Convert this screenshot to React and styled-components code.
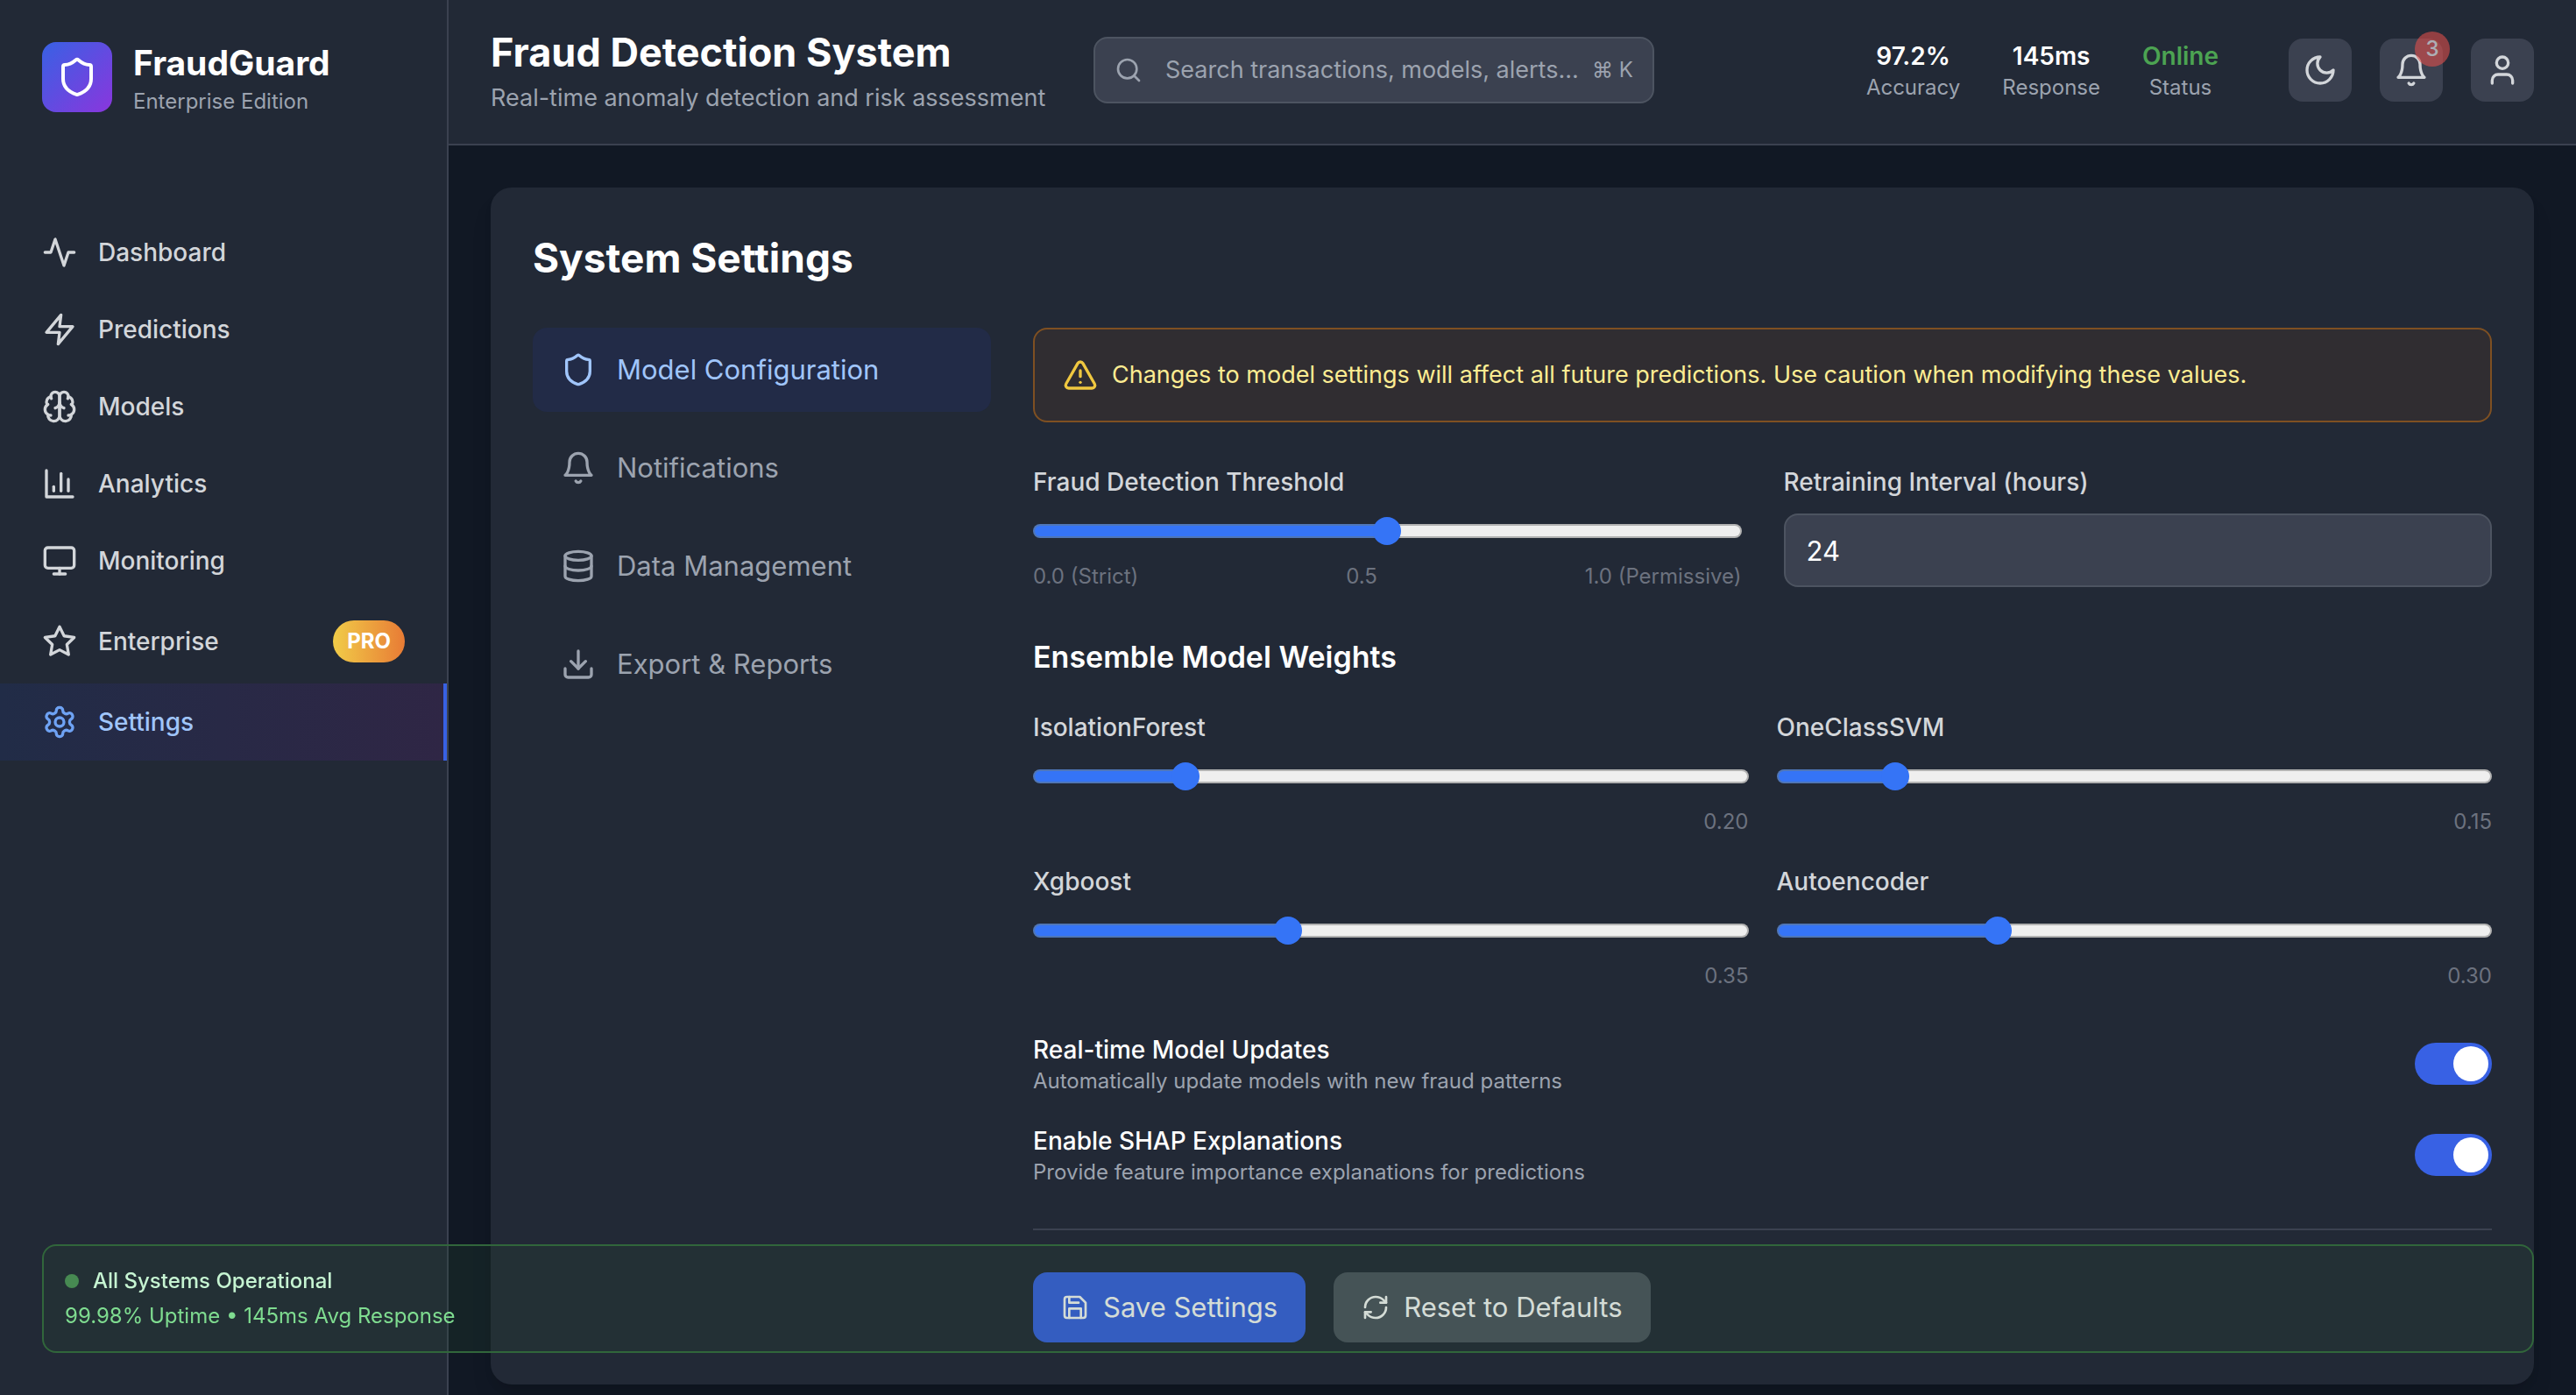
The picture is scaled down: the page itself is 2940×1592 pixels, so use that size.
import React, { useState } from "react";
import styled, { createGlobalStyle, css } from "styled-components";
import {
  Monitor,
  Shield,
  Search,
  User,
  Database,
  Download,
  TriangleAlert,
  RefreshCw,
} from "lucide-react";

const color = {
  page: "#111824",
  surface: "#222936",
  raised: "#3b4150",
  line: "#3b4150",
  edge: "#4d5461",
  white: "#ffffff",
  text: "#d3d6da",
  muted: "#9ca3af",
  faint: "#6c727f",
  blue: "#3861e4",
  sky: "#a0c5fa",
};

const GlobalStyle = createGlobalStyle`
  *, *::before, *::after { box-sizing: border-box; }
  body {
    margin: 0;
    background: ${color.page};
    color: ${color.white};
    font-family: Inter, "Liberation Sans", sans-serif;
    font-size: 28px;
    line-height: 40px;
    -webkit-font-smoothing: antialiased;
  }
  h1, h2, h3, p { margin: 0; }
  button, input { font: inherit; color: inherit; }
  svg { flex: none; display: block; }
`;

const Shell = styled.div`
  display: flex;
  height: 100vh;
`;

const Sidebar = styled.aside`
  flex: none;
  width: 512px;
  background: ${color.surface};
  border-right: 2px solid ${color.line};
`;

const Brand = styled.div`
  display: flex;
  align-items: center;
  gap: 24px;
  padding: 44px 48px;
`;

const BrandMark = styled.span`
  display: grid;
  place-items: center;
  width: 80px;
  height: 80px;
  border-radius: 16px;
  background: linear-gradient(135deg, #3861e4, #8a36dd);
`;

const BrandName = styled.p`
  font-size: 39px;
  line-height: 56px;
  font-weight: 700;
`;

const Small = styled.p`
  font-size: 24px;
  line-height: 32px;
  color: ${color.muted};
`;

const Nav = styled.nav`
  display: flex;
  flex-direction: column;
  padding-top: 68px;
`;

const NavLink = styled.a`
  display: flex;
  align-items: center;
  gap: 24px;
  padding: 24px 48px;
  font-weight: 500;
  text-decoration: none;
  color: ${color.text};
  ${(p) =>
    p.$active &&
    css`
      padding-right: 44px;
      border-right: 4px solid ${color.blue};
      color: ${color.sky};
      background: linear-gradient(90deg, #212c47, #2f2645);
      svg { color: #6ea2f3; }
    `}
`;

const ProBadge = styled.span`
  margin-left: auto;
  padding: 8px 16px;
  border-radius: 24px;
  font-size: 24px;
  line-height: 32px;
  font-weight: 700;
  color: ${color.white};
  background: linear-gradient(90deg, #f1cc48, #e87b35);
`;

const Page = styled.div`
  flex: 1;
  min-width: 0;
  display: flex;
  flex-direction: column;
`;

const Header = styled.header`
  display: flex;
  align-items: center;
  gap: 48px;
  padding: 28px 48px 32px;
  background: ${color.surface};
  border-bottom: 2px solid ${color.line};
`;

const Titles = styled.div`
  flex: none;
  width: 640px;
  white-space: nowrap;
`;

const Heading = styled.h1`
  font-size: 45px;
  line-height: 64px;
  font-weight: 700;
`;

const Tagline = styled.p`
  font-size: 27px;
  color: ${color.muted};
`;

const SearchBox = styled.label`
  display: flex;
  align-items: center;
  flex: none;
  width: 640px;
  height: 76px;
  padding: 0 22px;
  border: 2px solid ${color.edge};
  border-radius: 16px;
  background: ${color.raised};
  color: ${color.muted};
`;

const SearchInput = styled.input`
  flex: 1;
  min-width: 0;
  margin-left: 26px;
  padding: 0;
  border: 0;
  outline: 0;
  background: none;
  font-size: 27px;
  &::placeholder { color: ${color.muted}; opacity: 1; }
`;

const Keys = styled.kbd`
  font-family: inherit;
  font-size: 24px;
  line-height: 32px;
  white-space: nowrap;
`;

const HeaderEnd = styled.div`
  display: flex;
  align-items: center;
  gap: 80px;
  margin-left: auto;
`;

const Stats = styled.div`
  display: flex;
  gap: 48px;
  text-align: center;
`;

const StatValue = styled.p`
  font-weight: 600;
  color: ${(p) => (p.$good ? "#4ca352" : color.white)};
`;

const Actions = styled.div`
  display: flex;
  gap: 32px;
`;

const IconButton = styled.button`
  position: relative;
  display: grid;
  place-items: center;
  width: 72px;
  height: 72px;
  padding: 0;
  border: 0;
  border-radius: 16px;
  background: ${color.raised};
  color: ${color.text};
`;

const Count = styled.span`
  position: absolute;
  top: -8px;
  right: -8px;
  width: 40px;
  height: 40px;
  border-radius: 50%;
  font-size: 24px;
  line-height: 40px;
  font-weight: 500;
  color: ${color.white};
  background: #e4504b;
  opacity: 0.58;
`;

const Main = styled.main`
  flex: 1;
  min-height: 0;
  overflow-y: auto;
  scrollbar-width: none;
  padding: 48px;
`;

const Card = styled.section`
  padding: 48px;
  border-radius: 24px;
  background: ${color.surface};
  box-shadow: 0 20px 30px -6px rgba(0, 0, 0, 0.1), 0 8px 12px -4px rgba(0, 0, 0, 0.1);
`;

const CardTitle = styled.h2`
  margin-bottom: 48px;
  font-size: 46px;
  line-height: 64px;
  font-weight: 700;
`;

const Columns = styled.div`
  display: grid;
  grid-template-columns: repeat(4, 1fr);
  gap: 48px;
`;

const Tabs = styled.div`
  display: flex;
  flex-direction: column;
  gap: 16px;
`;

const Tab = styled.button`
  display: flex;
  align-items: center;
  gap: 24px;
  padding: 24px 32px;
  border: 0;
  border-radius: 16px;
  font-size: 31px;
  line-height: 48px;
  text-align: left;
  color: ${(p) => (p.$active ? color.sky : color.muted)};
  background: ${(p) => (p.$active ? "#222b47" : "transparent")};
`;

const Panel = styled.form`
  grid-column: span 3;
  display: flex;
  flex-direction: column;
  gap: 48px;
`;

const Notice = styled.p`
  display: flex;
  align-items: center;
  gap: 16px;
  padding: 32px;
  border: 2px solid #7f5022;
  border-radius: 16px;
  font-size: 27px;
  background: #302d31;
  color: #fcec92;
  svg { color: #f0c840; }
`;

const FieldGrid = styled.div`
  display: grid;
  grid-template-columns: 1fr 1fr;
  gap: ${(p) => p.$gap}px;
`;

const FieldLabel = styled.label`
  display: block;
  margin-bottom: 16px;
  font-weight: 500;
  color: ${color.text};
`;

const NumberInput = styled.input`
  display: block;
  width: 100%;
  height: 84px;
  padding: 16px 24px;
  border: 2px solid ${color.edge};
  border-radius: 16px;
  font-size: 31px;
  line-height: 48px;
  background: ${color.raised};
  appearance: textfield;
  &::-webkit-inner-spin-button { appearance: none; }
`;

const Range = styled.input`
  appearance: none;
  display: block;
  width: 100%;
  height: 40px;
  margin: 0;
  background: none;
  --stop: calc(16px + (100% - 32px) * var(--value));
  &::-webkit-slider-runnable-track {
    height: 16px;
    border: 2px solid transparent;
    border-radius: 8px;
    background:
      linear-gradient(90deg, #3574f6 var(--stop), #efefef var(--stop)) padding-box,
      linear-gradient(90deg, #4f76b8 var(--stop), #b2b2b2 var(--stop)) border-box;
  }
  &::-webkit-slider-thumb {
    appearance: none;
    width: 32px;
    height: 32px;
    margin: -10px 0 0;
    border-radius: 50%;
    background: #3574f6;
  }
`;

const Scale = styled.div`
  display: flex;
  justify-content: ${(p) => (p.$end ? "flex-end" : "space-between")};
  margin-top: 16px;
  font-size: 24px;
  line-height: 32px;
  color: ${color.faint};
`;

const SubTitle = styled.h3`
  margin-bottom: 32px;
  font-size: 34px;
  line-height: 56px;
  font-weight: 600;
`;

const Toggles = styled.div`
  display: flex;
  flex-direction: column;
  gap: 32px;
`;

const ToggleRow = styled.label`
  display: flex;
  align-items: center;
  justify-content: space-between;
`;

const ToggleName = styled.p`
  font-weight: 500;
`;

const Switch = styled.input`
  appearance: none;
  flex: none;
  display: flex;
  width: 88px;
  height: 48px;
  margin: 0;
  padding: 4px;
  border-radius: 24px;
  background: ${color.edge};
  &::before {
    content: "";
    width: 40px;
    height: 40px;
    border-radius: 50%;
    background: ${color.white};
  }
  &:checked {
    justify-content: flex-end;
    background: ${color.blue};
  }
`;

const Footer = styled.div`
  display: flex;
  gap: 32px;
  padding-top: 48px;
  border-top: 2px solid ${color.line};
`;

const Button = styled.button`
  display: flex;
  align-items: center;
  gap: 16px;
  padding: 16px 32px;
  border: 0;
  border-radius: 16px;
  font-size: 31px;
  line-height: 48px;
  background: ${(p) => (p.$primary ? color.blue : "#4d5460")};
`;

const StatusCard = styled.aside`
  position: fixed;
  left: 48px;
  right: 48px;
  bottom: 48px;
  display: flex;
  flex-direction: column;
  gap: 8px;
  padding: 24px;
  border: 2px solid #31663b;
  border-radius: 16px;
  font-size: 24px;
  line-height: 32px;
  color: #7fdc90;
  background: rgba(39, 81, 50, 0.2);
  pointer-events: none;
`;

const StatusTitle = styled.p`
  display: flex;
  align-items: center;
  gap: 16px;
  font-weight: 500;
  color: #c6f4d2;
  &::before {
    content: "";
    width: 16px;
    height: 16px;
    border-radius: 50%;
    background: #478a52;
  }
`;

const glyph = (...paths) =>
  function Glyph({ size }) {
    return (
      <svg
        width={size}
        height={size}
        viewBox="0 0 24 24"
        fill="none"
        stroke="currentColor"
        strokeWidth="2"
        strokeLinecap="round"
        strokeLinejoin="round"
        aria-hidden="true"
      >
        {paths.map((d) => (
          <path key={d} d={d} />
        ))}
      </svg>
    );
  };

const ActivityIcon = glyph("M22 12h-4l-3 9L9 3l-3 9H2");
const ZapIcon = glyph("M13 2 3 14h9l-1 8 10-12h-9l1-8z");
const BrainIcon = glyph(
  "M12 5a3 3 0 1 0-5.997.125 4 4 0 0 0-2.526 5.77 4 4 0 0 0 .556 6.588A4 4 0 1 0 12 18Z",
  "M12 5a3 3 0 1 1 5.997.125 4 4 0 0 1 2.526 5.77 4 4 0 0 1-.556 6.588A4 4 0 1 1 12 18Z",
  "M15 13a4.5 4.5 0 0 1-3-4 4.5 4.5 0 0 1-3 4",
  "M17.599 6.5a3 3 0 0 0 .399-1.375",
  "M6.003 5.125A3 3 0 0 0 6.401 6.5",
  "M3.477 10.896a4 4 0 0 1 .585-.396",
  "M19.938 10.5a4 4 0 0 1 .585.396",
  "M6 18a4 4 0 0 1-1.967-.516",
  "M19.967 17.484A4 4 0 0 1 18 18"
);
const ChartIcon = glyph("M3 3v18h18", "M18 17V9", "M13 17V5", "M8 17v-3");
const StarIcon = glyph(
  "M12 2l3.09 6.26L22 9.27l-5 4.87 1.18 6.88L12 17.77l-6.18 3.25L7 14.14 2 9.27l6.91-1.01L12 2z"
);
const GearIcon = glyph(
  "M12.22 2h-.44a2 2 0 0 0-2 2v.18a2 2 0 0 1-1 1.73l-.43.25a2 2 0 0 1-2 0l-.15-.08a2 2 0 0 0-2.73.73l-.22.38a2 2 0 0 0 .73 2.73l.15.1a2 2 0 0 1 1 1.72v.51a2 2 0 0 1-1 1.74l-.15.09a2 2 0 0 0-.73 2.73l.22.38a2 2 0 0 0 2.73.73l.15-.08a2 2 0 0 1 2 0l.43.25a2 2 0 0 1 1 1.73V20a2 2 0 0 0 2 2h.44a2 2 0 0 0 2-2v-.18a2 2 0 0 1 1-1.73l.43-.25a2 2 0 0 1 2 0l.15.08a2 2 0 0 0 2.73-.73l.22-.39a2 2 0 0 0-.73-2.73l-.15-.08a2 2 0 0 1-1-1.74v-.5a2 2 0 0 1 1-1.74l.15-.09a2 2 0 0 0 .73-2.73l-.22-.38a2 2 0 0 0-2.73-.73l-.15.08a2 2 0 0 1-2 0l-.43-.25a2 2 0 0 1-1-1.73V4a2 2 0 0 0-2-2z",
  "M12 9a3 3 0 1 0 0 6 3 3 0 0 0 0-6z"
);
const BellIcon = glyph(
  "M6 8a6 6 0 0 1 12 0c0 7 3 9 3 9H3s3-2 3-9",
  "M10.3 21a1.94 1.94 0 0 0 3.4 0"
);
const MoonIcon = glyph("M12 3a6 6 0 0 0 9 9 9 9 0 1 1-9-9Z");
const SaveIcon = glyph(
  "M19 21H5a2 2 0 0 1-2-2V5a2 2 0 0 1 2-2h11l5 5v11a2 2 0 0 1-2 2z",
  "M17 21v-8H7v8",
  "M7 3v5h8"
);

const navItems = [
  { label: "Dashboard", icon: ActivityIcon },
  { label: "Predictions", icon: ZapIcon },
  { label: "Models", icon: BrainIcon },
  { label: "Analytics", icon: ChartIcon },
  { label: "Monitoring", icon: Monitor },
  { label: "Enterprise", icon: StarIcon, badge: "PRO" },
  { label: "Settings", icon: GearIcon, active: true },
];

const stats = [
  { value: "97.2%", label: "Accuracy" },
  { value: "145ms", label: "Response" },
  { value: "Online", label: "Status", good: true },
];

const tabs = [
  { label: "Model Configuration", icon: Shield },
  { label: "Notifications", icon: BellIcon },
  { label: "Data Management", icon: Database },
  { label: "Export & Reports", icon: Download },
];

const weights = [
  { name: "IsolationForest", value: 0.2 },
  { name: "OneClassSVM", value: 0.15 },
  { name: "Xgboost", value: 0.35 },
  { name: "Autoencoder", value: 0.3 },
];

const toggles = [
  { name: "Real-time Model Updates", note: "Automatically update models with new fraud patterns" },
  { name: "Enable SHAP Explanations", note: "Provide feature importance explanations for predictions" },
];

function Slider({ id, value, onChange }) {
  return (
    <Range
      id={id}
      type="range"
      min="0"
      max="1"
      step="0.05"
      value={value}
      onChange={(e) => onChange(Number(e.target.value))}
      style={{ "--value": value }}
    />
  );
}

function WeightField({ name, value: initial }) {
  const [value, setValue] = useState(initial);
  const id = "weight-" + name;
  return (
    <div>
      <FieldLabel htmlFor={id}>{name}</FieldLabel>
      <Slider id={id} value={value} onChange={setValue} />
      <Scale $end>{value.toFixed(2)}</Scale>
    </div>
  );
}

export default function App() {
  const [tab, setTab] = useState(0);
  const [threshold, setThreshold] = useState(0.5);

  return (
    <>
      <GlobalStyle />
      <Shell>
        <Sidebar>
          <Brand>
            <BrandMark>
              <Shield size={48} />
            </BrandMark>
            <div>
              <BrandName>FraudGuard</BrandName>
              <Small>Enterprise Edition</Small>
            </div>
          </Brand>
          <Nav>
            {navItems.map(({ label, icon: Icon, badge, active }) => (
              <NavLink key={label} href="#" $active={active}>
                <Icon size={40} />
                {label}
                {badge && <ProBadge>{badge}</ProBadge>}
              </NavLink>
            ))}
          </Nav>
        </Sidebar>

        <Page>
          <Header>
            <Titles>
              <Heading>Fraud Detection System</Heading>
              <Tagline>Real-time anomaly detection and risk assessment</Tagline>
            </Titles>
            <SearchBox>
              <Search size={32} />
              <SearchInput
                type="text"
                aria-label="Search"
                placeholder="Search transactions, models, alerts..."
              />
              <Keys>⌘ K</Keys>
            </SearchBox>
            <HeaderEnd>
              <Stats>
                {stats.map((s) => (
                  <div key={s.label}>
                    <StatValue $good={s.good}>{s.value}</StatValue>
                    <Small>{s.label}</Small>
                  </div>
                ))}
              </Stats>
              <Actions>
                <IconButton aria-label="Theme">
                  <MoonIcon size={40} />
                </IconButton>
                <IconButton aria-label="Alerts">
                  <BellIcon size={40} />
                  <Count>3</Count>
                </IconButton>
                <IconButton aria-label="Account">
                  <User size={40} />
                </IconButton>
              </Actions>
            </HeaderEnd>
          </Header>

          <Main>
            <Card>
              <CardTitle>System Settings</CardTitle>
              <Columns>
                <Tabs>
                  {tabs.map(({ label, icon: Icon }, i) => (
                    <Tab key={label} type="button" $active={i === tab} onClick={() => setTab(i)}>
                      <Icon size={40} />
                      {label}
                    </Tab>
                  ))}
                </Tabs>
                <Panel onSubmit={(e) => e.preventDefault()}>
                  <Notice>
                    <TriangleAlert size={40} />
                    Changes to model settings will affect all future predictions. Use caution when
                    modifying these values.
                  </Notice>
                  <FieldGrid $gap={48}>
                    <div>
                      <FieldLabel htmlFor="threshold">Fraud Detection Threshold</FieldLabel>
                      <Slider id="threshold" value={threshold} onChange={setThreshold} />
                      <Scale>
                        <span>0.0 (Strict)</span>
                        <span>{threshold}</span>
                        <span>1.0 (Permissive)</span>
                      </Scale>
                    </div>
                    <div>
                      <FieldLabel htmlFor="interval">Retraining Interval (hours)</FieldLabel>
                      <NumberInput id="interval" type="number" defaultValue={24} />
                    </div>
                  </FieldGrid>
                  <div>
                    <SubTitle>Ensemble Model Weights</SubTitle>
                    <FieldGrid $gap={32}>
                      {weights.map((w) => (
                        <WeightField key={w.name} {...w} />
                      ))}
                    </FieldGrid>
                  </div>
                  <Toggles>
                    {toggles.map((t) => (
                      <ToggleRow key={t.name}>
                        <div>
                          <ToggleName>{t.name}</ToggleName>
                          <Small>{t.note}</Small>
                        </div>
                        <Switch type="checkbox" defaultChecked />
                      </ToggleRow>
                    ))}
                  </Toggles>
                  <Footer>
                    <Button type="submit" $primary>
                      <SaveIcon size={32} />
                      Save Settings
                    </Button>
                    <Button type="reset">
                      <RefreshCw size={32} />
                      Reset to Defaults
                    </Button>
                  </Footer>
                </Panel>
              </Columns>
            </Card>
          </Main>
        </Page>
      </Shell>
      <StatusCard>
        <StatusTitle>All Systems Operational</StatusTitle>
        <p>99.98% Uptime • 145ms Avg Response</p>
      </StatusCard>
    </>
  );
}
